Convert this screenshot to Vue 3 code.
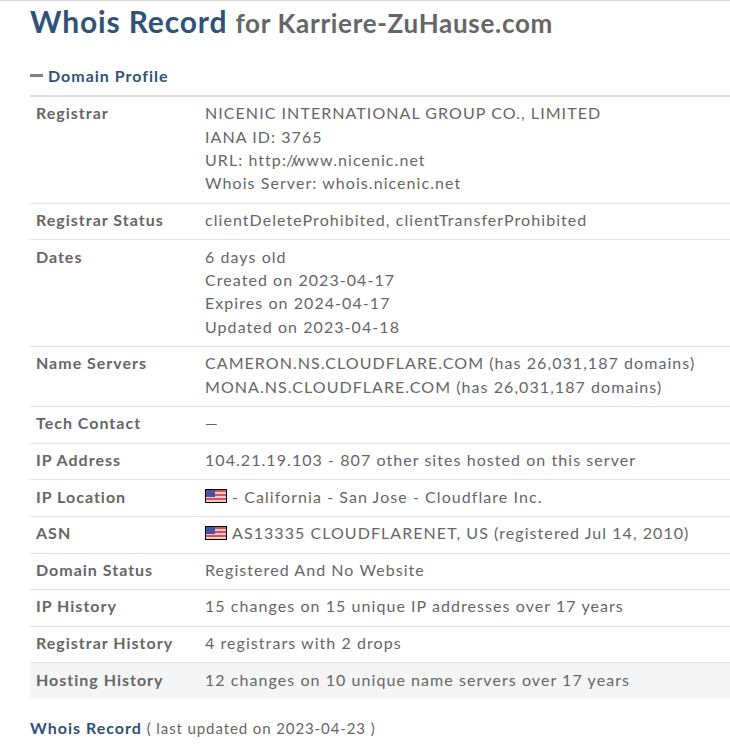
<script setup>
const rows = [
  { label: 'Registrar', lines: ['NICENIC INTERNATIONAL GROUP CO., LIMITED', 'IANA ID: 3765', 'URL: http://www.nicenic.net', 'Whois Server: whois.nicenic.net'] },
  { label: 'Registrar Status', lines: ['clientDeleteProhibited, clientTransferProhibited'] },
  { label: 'Dates', lines: ['6 days old', 'Created on 2023-04-17', 'Expires on 2024-04-17', 'Updated on 2023-04-18'] },
  { label: 'Name Servers', lines: ['CAMERON.NS.CLOUDFLARE.COM (has 26,031,187 domains)', 'MONA.NS.CLOUDFLARE.COM (has 26,031,187 domains)'] },
  { label: 'Tech Contact', lines: ['—'] },
  { label: 'IP Address', lines: ['104.21.19.103 - 807 other sites hosted on this server'] },
  { label: 'IP Location', flag: true, lines: ['- California - San Jose - Cloudflare Inc.'] },
  { label: 'ASN', flag: true, lines: ['AS13335 CLOUDFLARENET, US (registered Jul 14, 2010)'] },
  { label: 'Domain Status', lines: ['Registered And No Website'] },
  { label: 'IP History', lines: ['15 changes on 15 unique IP addresses over 17 years'] },
  { label: 'Registrar History', lines: ['4 registrars with 2 drops'] },
  { label: 'Hosting History', hl: true, lines: ['12 changes on 10 unique name servers over 17 years'] }
]
</script>

<template>
  <main class="page">
    <h1 class="title"><span class="blue">Whois Record</span> <small>for Karriere-ZuHause.com</small></h1>
    <h2 class="section"><span class="dash"></span>Domain Profile</h2>
    <div class="table">
      <div v-for="r in rows" :key="r.label" class="row" :class="{ hl: r.hl }">
        <div class="label">{{ r.label }}</div>
        <div class="value">
          <div v-for="l in r.lines" :key="l" class="line">
            <span v-if="r.flag" class="flag"><span class="canton"></span></span>
            <template v-if="l.includes('//')">{{ l.split('//')[0] }}<span class="slash-a">/</span><span class="slash-b">/</span>{{ l.split('//')[1] }}</template>
            <template v-else>{{ l }}</template>
          </div>
        </div>
      </div>
    </div>
    <div class="foot"><span class="blue">Whois Record</span> <span class="note">( last updated on 2023-04-23 )</span></div>
  </main>
</template>

<style scoped>
.page {
  box-sizing: border-box;
  width: 730px;
  height: 746px;
  overflow: hidden;
  padding: 0 0 0 30px;
  border-top: 1px solid #d8d8d8;
  font-family: Lato, sans-serif;
  color: #666;
  background: #fff;
}
.title {
  margin: 1px 0 0;
  font-size: 30px;
  line-height: 38px;
  font-weight: 700;
  letter-spacing: 0.85px;
}
.title small {
  font-size: 26px;
  letter-spacing: 0.7px;
  color: #666;
}
.blue { color: #2f5378; }
.section {
  display: flex;
  align-items: center;
  margin: 19px 0 0;
  height: 28px;
  font-size: 16px;
  font-weight: 700;
  letter-spacing: 1px;
  color: #2f5378;
}
.dash {
  width: 13px;
  height: 3px;
  background: #808080;
  margin-right: 5px;
}
.table { border-top: 2px solid #e0e0e0; margin-top: 6px; }
.row {
  display: flex;
  padding: 4.2px 0 8px;
  border-top: 1px solid #e4e4e4;
  font-size: 16px;
  line-height: 23.4px;
  letter-spacing: 1.06px;
}
.row:first-child { border-top: 0; }
.row.hl { background: #f5f5f5; }
.label {
  box-sizing: border-box;
  width: 175px;
  padding-left: 6px;
  font-weight: 700;
  letter-spacing: 1px;
  flex: none;
}
.line { display: flex; align-items: center; white-space: pre; }
.slash-a { letter-spacing: -2.6px; margin-left: -1px; }
.slash-b { letter-spacing: -5.2px; }
.flag {
  position: relative;
  flex: none;
  box-sizing: border-box;
  width: 22px;
  height: 14px;
  margin-right: 5px;
  border: 1px solid #000;
  overflow: hidden;
  background: repeating-linear-gradient(180deg, #d4525c 0, #d4525c 2px, #f4c8c8 2px, #f4c8c8 4px);
  filter: blur(0.6px);
}
.canton {
  position: absolute;
  left: 0;
  top: 0;
  width: 9px;
  height: 7px;
  background: #4a52a8;
}
.foot {
  margin-top: 18px;
  font-size: 16px;
  font-weight: 700;
  letter-spacing: 1px;
  line-height: 22px;
  color: #666;
}
.note {
  font-size: 15px;
  font-weight: 400;
  letter-spacing: 0.9px;
}
</style>
